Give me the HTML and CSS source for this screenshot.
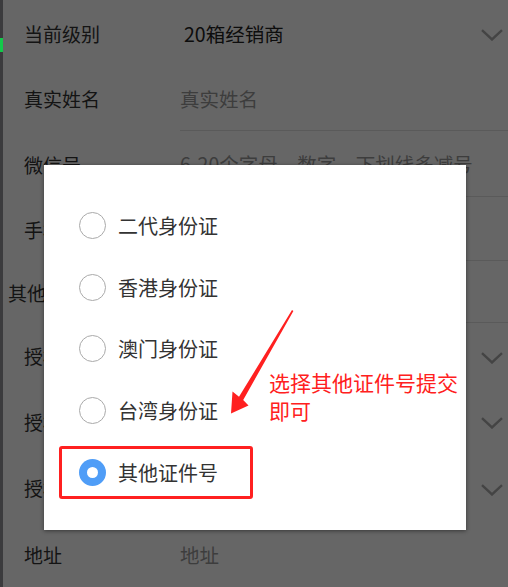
FILE: index.html
```html
<!DOCTYPE html>
<html lang="zh-CN">
<head>
<meta charset="utf-8">
<title>选择证件类型</title>
<link rel="stylesheet" href="styles.css">
</head>
<body>
<div class="app">
  <div class="strip"><span class="strip-green"></span></div>
  <div class="form">
    <div class="row r1">
      <div class="label">当前级别</div>
      <div class="value select"><span class="val">20箱经销商</span>
        <svg class="chev" width="22" height="12" viewBox="0 0 22 12"><path d="M1 1.2 L11 10.5 L21 1.2" fill="none" stroke="#aaa" stroke-width="2.4"/></svg>
      </div>
    </div>
    <div class="row r2">
      <div class="label">真实姓名</div>
      <div class="value lined"><span class="ph">真实姓名</span></div>
    </div>
    <div class="row r3">
      <div class="label">微信号</div>
      <div class="value lined"><span class="ph">6-20个字母、数字、下划线多减号</span></div>
    </div>
    <div class="row r4">
      <div class="label">手机号</div>
      <div class="value lined"></div>
    </div>
    <div class="row r5">
      <div class="label wide">其他证件类型</div>
      <div class="value lined"></div>
    </div>
    <div class="row r6">
      <div class="label">授权品牌</div>
      <div class="value select end">
        <svg class="chev" width="22" height="12" viewBox="0 0 22 12"><path d="M1 1.2 L11 10.5 L21 1.2" fill="none" stroke="#aaa" stroke-width="2.4"/></svg>
      </div>
    </div>
    <div class="row r7">
      <div class="label">授权区域</div>
      <div class="value select end">
        <svg class="chev" width="22" height="12" viewBox="0 0 22 12"><path d="M1 1.2 L11 10.5 L21 1.2" fill="none" stroke="#aaa" stroke-width="2.4"/></svg>
      </div>
    </div>
    <div class="row r8">
      <div class="label">授权渠道</div>
      <div class="value select end">
        <svg class="chev" width="22" height="12" viewBox="0 0 22 12"><path d="M1 1.2 L11 10.5 L21 1.2" fill="none" stroke="#aaa" stroke-width="2.4"/></svg>
      </div>
    </div>
    <div class="row r9">
      <div class="label">地址</div>
      <div class="value"><span class="ph">地址</span></div>
    </div>
  </div>

  <div class="overlay"></div>

  <div class="modal">
    <div class="option"><span class="radio"></span><span class="opt-text">二代身份证</span></div>
    <div class="option"><span class="radio"></span><span class="opt-text">香港身份证</span></div>
    <div class="option"><span class="radio"></span><span class="opt-text">澳门身份证</span></div>
    <div class="option"><span class="radio"></span><span class="opt-text">台湾身份证</span></div>
    <div class="option-wrap"><div class="option marked"><span class="radio checked"></span><span class="opt-text">其他证件号</span></div></div>
  </div>

  <svg class="arrow" width="508" height="587" viewBox="0 0 508 587">
    <polygon points="292,310 293.4,311 243.2,400 248.5,405.5 231,413.5 232.5,391.5 239,396.8" fill="#ff2020"/>
  </svg>
  <div class="note">选择其他证件号提交<br>即可</div>
</div>
</body>
</html>
```

FILE: styles.css
```css
html, body {
  margin: 0;
  padding: 0;
}
body {
  width: 508px;
  height: 587px;
  overflow: hidden;
  background: #fff;
  font-family: "Noto Sans CJK SC", "Noto Sans", sans-serif;
}
.app {
  position: relative;
  width: 508px;
  height: 587px;
  display: flex;
}
.strip {
  width: 3px;
  flex: none;
  background: #3b3b3d;
  position: relative;
  z-index: 5;
  display: flex;
  flex-direction: column;
  padding-top: 38px;
}
.strip-green {
  display: block;
  width: 3px;
  height: 14px;
  background: #13c94a;
}
.form {
  flex: 1;
  display: flex;
  flex-direction: column;
}
.row {
  display: flex;
  align-items: stretch;
}
.r1 { height: 66px; }
.r2 { height: 65px; }
.r3 { height: 66px; }
.r4 { height: 64px; }
.r5 { height: 62px; }
.r6 { height: 65px; }
.r7 { height: 66px; }
.r8 { height: 67px; }
.r9 { height: 66px; }
.label {
  width: 177px;
  flex: none;
  padding-left: 21px;
  box-sizing: border-box;
  display: flex;
  align-items: center;
  font-size: 19px;
  color: #333;
  white-space: nowrap;
}
.label.wide {
  padding-left: 5px;
}
.value {
  flex: 1;
  display: flex;
  align-items: center;
  font-size: 19.5px;
  white-space: nowrap;
}
.value.lined {
  border-bottom: 1px solid #e2e2e2;
  box-sizing: border-box;
}
.value.select {
  justify-content: space-between;
  padding-right: 5px;
}
.value.select.end {
  justify-content: flex-end;
}
.val {
  color: #222;
  padding-left: 4px;
}
.ph {
  color: #999;
}
.chev {
  display: block;
  margin-top: 4px;
}
.overlay {
  position: absolute;
  inset: 0;
  background: rgba(0, 0, 0, 0.6);
  z-index: 1;
}
.modal {
  position: absolute;
  left: 44px;
  top: 165px;
  width: 422px;
  height: 365px;
  background: #fff;
  box-shadow: 0 1px 4px rgba(0, 0, 0, 0.45);
  z-index: 2;
  box-sizing: border-box;
  padding: 30px 0 0 35px;
  display: flex;
  flex-direction: column;
}
.option {
  height: 61.5px;
  display: flex;
  align-items: center;
  flex: none;
}
.option-wrap {
  height: 61.5px;
  display: flex;
  align-items: center;
}
.option.marked {
  height: 53px;
  width: 194px;
  margin-left: -20px;
  padding-left: 17px;
  border: 3px solid #ff2020;
  border-radius: 3px;
  box-sizing: border-box;
  margin-top: 1px;
}
.radio {
  width: 27px;
  height: 27px;
  border-radius: 50%;
  border: 1.5px solid #aaa;
  box-sizing: border-box;
  flex: none;
  display: flex;
  align-items: center;
  justify-content: center;
}
.radio.checked {
  border: none;
  background: #4f9df7;
}
.radio.checked::after {
  content: "";
  width: 11px;
  height: 11px;
  border-radius: 50%;
  background: #fff;
}
.opt-text {
  margin-left: 12px;
  font-size: 20px;
  color: #333;
  white-space: nowrap;
}
.arrow {
  position: absolute;
  left: 0;
  top: 0;
  z-index: 3;
  pointer-events: none;
}
.note {
  position: absolute;
  left: 269px;
  top: 368px;
  z-index: 3;
  font-size: 21px;
  line-height: 28px;
  color: #ff2020;
  white-space: nowrap;
}
```
